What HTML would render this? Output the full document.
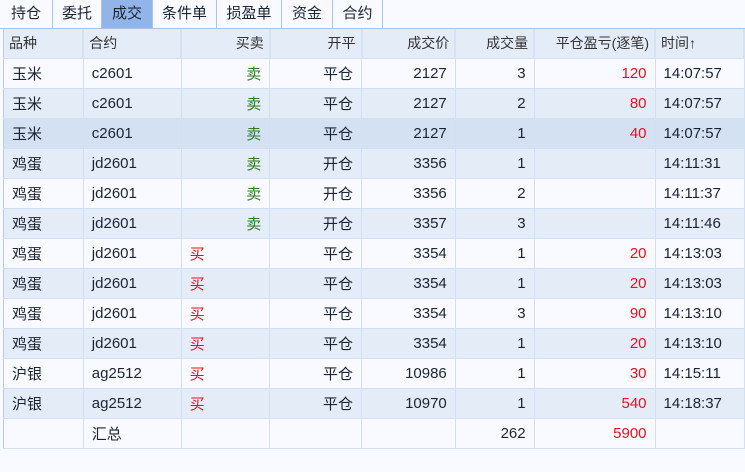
<!DOCTYPE html>
<html><head><meta charset="utf-8"><style>
*{margin:0;padding:0;box-sizing:border-box}
body{width:745px;height:472px;background:#f8faff;font-family:"Liberation Sans","Noto Sans CJK SC",sans-serif;color:#1c2433;overflow:hidden;position:relative}
.tabs{position:absolute;left:0;top:0;height:29px;display:flex;border-bottom:1px solid #a9c4ea;width:745px}
.tab{height:28px;line-height:28px;font-size:15px;text-align:center;border-right:1px solid #a9c4ea;background:#f8faff}
.tab.sel{background:#91b5e9}
table{position:absolute;left:3px;top:29px;border-collapse:collapse;table-layout:fixed;border-left:1px solid #b7cdee}
td{height:30px;border-right:1px solid #d2e0f3;border-bottom:1px solid #d2e0f3;font-size:15px;padding:0 8px;white-space:nowrap;overflow:hidden}
tr.h td{height:29px;background:#e4ecf7;font-size:14px;color:#333;padding:0 5px;border-right:2px solid #d6e2f2}
tr.b td{background:#e4ecf7}
tr.w td{background:#f8faff}
tr.s td{background:#d3e1f3}
.r{text-align:right}
.g{color:#2d7a1c}
.red{color:#e8101e}
</style></head><body>
<div class="tabs">
<div class="tab" style="width:53px">持仓</div>
<div class="tab" style="width:49px">委托</div>
<div class="tab sel" style="width:51px">成交</div>
<div class="tab" style="width:64px">条件单</div>
<div class="tab" style="width:65px">损盈单</div>
<div class="tab" style="width:51px">资金</div>
<div class="tab" style="width:50px">合约</div>
</div>
<table>
<colgroup><col style="width:80px"><col style="width:98px"><col style="width:89px"><col style="width:92px"><col style="width:94px"><col style="width:79px"><col style="width:121px"><col style="width:89px"></colgroup>
<tr class="h"><td>品种</td><td>合约</td><td class="r">买卖</td><td class="r">开平</td><td class="r">成交价</td><td class="r">成交量</td><td class="r">平仓盈亏(逐笔)</td><td>时间↑</td></tr>
<tr class="w"><td>玉米</td><td>c2601</td><td class="r g">卖</td><td class="r">平仓</td><td class="r">2127</td><td class="r">3</td><td class="r red">120</td><td>14:07:57</td></tr>
<tr class="b"><td>玉米</td><td>c2601</td><td class="r g">卖</td><td class="r">平仓</td><td class="r">2127</td><td class="r">2</td><td class="r red">80</td><td>14:07:57</td></tr>
<tr class="s"><td>玉米</td><td>c2601</td><td class="r g">卖</td><td class="r">平仓</td><td class="r">2127</td><td class="r">1</td><td class="r red">40</td><td>14:07:57</td></tr>
<tr class="b"><td>鸡蛋</td><td>jd2601</td><td class="r g">卖</td><td class="r">开仓</td><td class="r">3356</td><td class="r">1</td><td></td><td>14:11:31</td></tr>
<tr class="w"><td>鸡蛋</td><td>jd2601</td><td class="r g">卖</td><td class="r">开仓</td><td class="r">3356</td><td class="r">2</td><td></td><td>14:11:37</td></tr>
<tr class="b"><td>鸡蛋</td><td>jd2601</td><td class="r g">卖</td><td class="r">开仓</td><td class="r">3357</td><td class="r">3</td><td></td><td>14:11:46</td></tr>
<tr class="w"><td>鸡蛋</td><td>jd2601</td><td class="red">买</td><td class="r">平仓</td><td class="r">3354</td><td class="r">1</td><td class="r red">20</td><td>14:13:03</td></tr>
<tr class="b"><td>鸡蛋</td><td>jd2601</td><td class="red">买</td><td class="r">平仓</td><td class="r">3354</td><td class="r">1</td><td class="r red">20</td><td>14:13:03</td></tr>
<tr class="w"><td>鸡蛋</td><td>jd2601</td><td class="red">买</td><td class="r">平仓</td><td class="r">3354</td><td class="r">3</td><td class="r red">90</td><td>14:13:10</td></tr>
<tr class="b"><td>鸡蛋</td><td>jd2601</td><td class="red">买</td><td class="r">平仓</td><td class="r">3354</td><td class="r">1</td><td class="r red">20</td><td>14:13:10</td></tr>
<tr class="w"><td>沪银</td><td>ag2512</td><td class="red">买</td><td class="r">平仓</td><td class="r">10986</td><td class="r">1</td><td class="r red">30</td><td>14:15:11</td></tr>
<tr class="b"><td>沪银</td><td>ag2512</td><td class="red">买</td><td class="r">平仓</td><td class="r">10970</td><td class="r">1</td><td class="r red">540</td><td>14:18:37</td></tr>
<tr class="w"><td></td><td>汇总</td><td></td><td></td><td></td><td class="r">262</td><td class="r red">5900</td><td></td></tr>
</table>
</body></html>
